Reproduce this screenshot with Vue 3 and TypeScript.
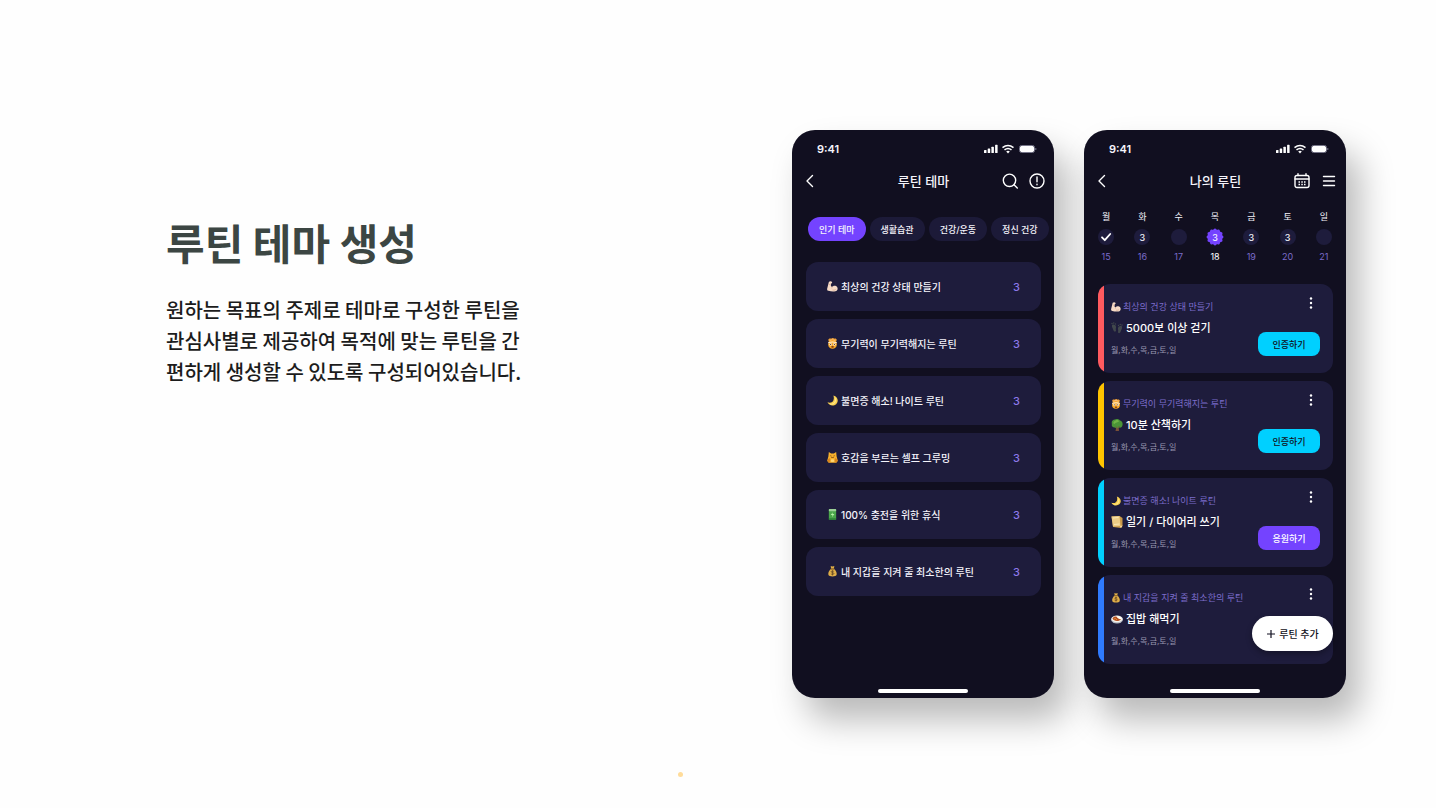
<script setup lang="ts">
type Emoji = 'arm' | 'mind' | 'moon' | 'cat' | 'battery' | 'money' | 'feet' | 'tree' | 'note' | 'food'

interface Theme { emoji: Emoji; title: string; count: number }
interface Day { name: string; date: number; state: 'done' | 'planned' | 'empty' | 'today'; count?: number }
interface Routine {
  theme: Theme
  emoji: Emoji
  title: string
  color: string
  action?: { label: string; kind: 'verify' | 'cheer' }
}

const chips = ['인기 테마', '생활습관', '건강/운동', '정신 건강']

const themes: Theme[] = [
  { emoji: 'arm', title: '최상의 건강 상태 만들기', count: 3 },
  { emoji: 'mind', title: '무기력이 무기력해지는 루틴', count: 3 },
  { emoji: 'moon', title: '불면증 해소! 나이트 루틴', count: 3 },
  { emoji: 'cat', title: '호감을 부르는 셀프 그루밍', count: 3 },
  { emoji: 'battery', title: '100% 충전을 위한 휴식', count: 3 },
  { emoji: 'money', title: '내 지갑을 지켜 줄 최소한의 루틴', count: 3 },
]

const days: Day[] = [
  { name: '월', date: 15, state: 'done' },
  { name: '화', date: 16, state: 'planned', count: 3 },
  { name: '수', date: 17, state: 'empty' },
  { name: '목', date: 18, state: 'today', count: 3 },
  { name: '금', date: 19, state: 'planned', count: 3 },
  { name: '토', date: 20, state: 'planned', count: 3 },
  { name: '일', date: 21, state: 'empty' },
]

const routines: Routine[] = [
  { theme: themes[0], emoji: 'feet', title: '5000보 이상 걷기', color: 'red', action: { label: '인증하기', kind: 'verify' } },
  { theme: themes[1], emoji: 'tree', title: '10분 산책하기', color: 'yellow', action: { label: '인증하기', kind: 'verify' } },
  { theme: themes[2], emoji: 'note', title: '일기 / 다이어리 쓰기', color: 'cyan', action: { label: '응원하기', kind: 'cheer' } },
  { theme: themes[5], emoji: 'food', title: '집밥 해먹기', color: 'blue' },
]

const repeat = '월,화,수,목,금,토,일'

function scallop(bumps: number, r: number, depth: number): string {
  const pts: string[] = []
  for (let i = 0; i < 120; i++) {
    const a = (i / 120) * Math.PI * 2
    const d = r + depth * Math.cos(a * bumps)
    pts.push(`${(9 + d * Math.cos(a)).toFixed(2)},${(9 + d * Math.sin(a)).toFixed(2)}`)
  }
  return pts.join(' ')
}
const badge = scallop(12, 8, 0.5)
</script>

<template>
  <svg class="sprite" aria-hidden="true">
    <symbol id="e-arm" viewBox="0 0 24 24">
      <path d="M4 2c2-2 6-1.500 7 .3.700 1.300-.1 2.700-1.800 3.200L8.300 10.500c1.300.9 2 1.900 2.400 2.800 1.800-2.800 5.800-4 9-2.300 3.800 2 4.600 7 1.900 9.800-2.900 2.800-11.500 3-18.500.6-2.300-.8-3.100-2.300-2.800-4.500z" fill="#f6dac6" />
      <path d="M10.700 13.300c.3 1 .2 2-.3 2.900M4 8c1.700.2 3.300-.5 5-2M12 19.500c2.500.8 5 .2 7-1" fill="none" stroke="#c8957b" stroke-width="1.200" />
    </symbol>
    <symbol id="e-mind" viewBox="0 0 24 24">
      <path d="M4 7C1 3 5 0 9 1.500c2-2 5-2 7 0 4-1 7 2.500 4 5.500l-1 3H5z" fill="#f4a53a" />
      <path d="M6 6c2-3 10-3 12 0l-1 3H7z" fill="#f7d5c5" />
      <circle cx="12" cy="14" r="9.500" fill="#f8a928" />
      <path d="M2.500 9.500q9.500-4 19 0v2q-9.500-3-19 0z" fill="#fff0dc" />
      <circle cx="8" cy="14" r="2.600" fill="#fff" /><circle cx="16" cy="14" r="2.600" fill="#fff" />
      <circle cx="8" cy="14" r="1.300" fill="#5b2c10" /><circle cx="16" cy="14" r="1.300" fill="#5b2c10" />
      <ellipse cx="12" cy="19.500" rx="3" ry="1.800" fill="#81380f" />
    </symbol>
    <symbol id="e-moon" viewBox="0 0 24 24">
      <path d="M14 1c10 3 12 13 6 19-6 5-16 3-19-4 8 3 17-2 13-15z" fill="#f8cf4f" />
      <path d="M17 4c5 6 3 13-3 16-3 1.500-7 1-9-1 9 2 15-5 12-15z" fill="#ffe78b" />
    </symbol>
    <symbol id="e-cat" viewBox="0 0 24 24">
      <path d="M4 0l5 3h6l5-3 1 10 2.500 9-3 4.500h-17l-3-4.500 2.500-9z" fill="#f7b02c" />
      <path d="M2 16l4-3 2 6-4 4-3-3zm20 0l-4-3-2 6 4 4 3-3z" fill="#d9851d" />
      <path d="M7 8l3 1M17 8l-3 1M9 12h6" stroke="#714016" stroke-width="1.500" />
      <ellipse cx="12" cy="19" rx="4" ry="3" fill="#ffd673" />
    </symbol>
    <symbol id="e-battery" viewBox="0 0 24 24">
      <rect x="4" y="0" width="16" height="24" rx="2" fill="#4aa64b" />
      <rect x="4" y="0" width="16" height="5" rx="1.500" fill="#9bcf96" />
      <rect x="4" y="20" width="16" height="4" rx="1.500" fill="#2d8138" />
      <path d="M13 7l-5 6h4l-1 5 5-7h-4z" fill="#b8f5a9" />
    </symbol>
    <symbol id="e-money" viewBox="0 0 24 24">
      <path d="M8 0l4 1 4-1-1 6c4 3 7 8 6 13-1 5-17 5-18 0-1-5 2-10 6-13z" fill="#dfae48" />
      <path d="M8 6.500h8" stroke="#805a25" stroke-width="2.500" />
      <path d="M15 12c-1-1.500-6-1.500-6 .5 0 2.500 6 1 6 4 0 2.500-5 2-6.500.5M12 9.500v11" fill="none" stroke="#674a25" stroke-width="1.800" />
    </symbol>
    <symbol id="e-feet" viewBox="0 0 24 24">
      <g fill="#41474c">
        <path d="M2 6c4-2 8 0 8 4 0 3-1 4 0 7 0 3-4 3-5 0-1-4-4-7-3-11z" />
        <path d="M22 9c-4-2-8 0-8 4 0 3 1 4 0 7 0 3 4 3 5 0 1-4 4-7 3-11z" />
        <circle cx="2" cy="3" r="1.500" /><circle cx="5.500" cy="2" r="1.500" /><circle cx="9" cy="4" r="1.300" />
        <circle cx="22" cy="6" r="1.500" /><circle cx="18.500" cy="5" r="1.500" /><circle cx="15" cy="7" r="1.300" />
      </g>
    </symbol>
    <symbol id="e-tree" viewBox="0 0 24 24">
      <path d="M11 13h4l1 11H9z" fill="#795038" />
      <path d="M8 1c4-2 8-1 10 2 4 1 6 5 5 9 0 4-4 6-7 5-3 3-6 2-8 0-4 1-8-3-6-7-2-4 1-9 6-9z" fill="#4a9437" />
      <path d="M9 3c4-2 7 0 7 2-2 2-7 2-9 5-4-1-2-6 2-7z" fill="#6fb347" />
      <path d="M12 20l-2-5m3 4l4-5" stroke="#795038" stroke-width="1.500" />
    </symbol>
    <symbol id="e-note" viewBox="0 0 24 24">
      <path d="M1 1l16-1 6 4v16l-3 4-16-2z" fill="#c99a49" />
      <path d="M1 1l16-1 2 20-15 1z" fill="#eccb85" />
      <path d="M4 4l11-1M6 17l11-1" stroke="#fff0c5" stroke-width="1.500" />
      <path d="M18 20l5-1-3 5z" fill="#f8dda0" />
    </symbol>
    <symbol id="e-food" viewBox="0 0 24 24">
      <ellipse cx="12" cy="13" rx="12" ry="8" fill="#b7bdc7" />
      <ellipse cx="12" cy="12" rx="11" ry="6.500" fill="#f5f1ea" />
      <path d="M3 11c3-5 8-5 10-2s5 1 7 3c-3 6-15 5-17-1z" fill="#b75224" />
      <path d="M12 8c4-2 8 0 9 3-2 3-6 1-9-3z" fill="#fffdf4" />
      <path d="M6 12l3-1 3 3" stroke="#f09c40" stroke-width="1.600" fill="none" />
    </symbol>
    <symbol id="status" viewBox="0 0 53 10">
      <g fill="#fff">
        <rect x="0" y="6" width="2.500" height="3" rx=".6" /><rect x="3.700" y="4.500" width="2.500" height="4.500" rx=".6" />
        <rect x="7.400" y="2.700" width="2.500" height="6.300" rx=".6" /><rect x="11.100" y=".8" width="2.500" height="8.200" rx=".6" />
        <rect x="36" y="2" width="14" height="6" rx="1.300" />
      </g>
      <path d="M18.500 3.600q5.500-4.200 11 0M20.500 5.800q3.500-2.700 7 0" fill="none" stroke="#fff" stroke-width="1.600" />
      <path d="M22.200 7.500q1.800-1.400 3.600 0L24 9.400z" fill="#fff" />
      <rect x="35.500" y="1.500" width="15" height="7" rx="2" fill="none" stroke="#77768a" />
      <path d="M51.800 4v2" stroke="#77768a" stroke-width="1" />
    </symbol>
  </svg>

  <main class="page">
    <section class="intro">
      <h1>루틴 테마 생성</h1>
      <p>원하는 목표의 주제로 테마로 구성한 루틴을 관심사별로 제공하여 목적에 맞는 루틴을 간편하게 생성할 수 있도록 구성되어있습니다.</p>
    </section>

    <div class="phones">
      <section class="phone" aria-label="루틴 테마">
        <div class="status"><span>9:41</span><svg><use href="#status" /></svg></div>
        <header class="bar">
          <button class="icon" aria-label="뒤로"><svg viewBox="0 0 16 16"><path d="M10.500 2.500L5 8l5.500 5.500" /></svg></button>
          <h2>루틴 테마</h2>
          <div class="tools">
            <button class="icon" aria-label="검색"><svg viewBox="0 0 16 16"><circle cx="7.500" cy="7.300" r="6.200" /><path d="M12 11.800l3.300 3.300" /></svg></button>
            <button class="icon" aria-label="안내"><svg viewBox="0 0 16 16"><circle cx="8" cy="8" r="7" /><path d="M8 4v4.700M8 11.200v.6" /></svg></button>
          </div>
        </header>
        <nav class="chips">
          <button v-for="(c, i) in chips" :key="c" class="chip" :class="{ on: i === 0 }">{{ c }}</button>
        </nav>
        <ul class="themes">
          <li v-for="t in themes" :key="t.title">
            <svg class="emoji"><use :href="`#e-${t.emoji}`" /></svg>
            <span class="name">{{ t.title }}</span>
            <span class="count">{{ t.count }}</span>
          </li>
        </ul>
        <div class="home"></div>
      </section>

      <section class="phone" aria-label="나의 루틴">
        <div class="status"><span>9:41</span><svg><use href="#status" /></svg></div>
        <header class="bar">
          <button class="icon" aria-label="뒤로"><svg viewBox="0 0 16 16"><path d="M10.500 2.500L5 8l5.500 5.500" /></svg></button>
          <h2>나의 루틴</h2>
          <div class="tools">
            <button class="icon" aria-label="달력">
              <svg viewBox="0 0 16 16">
                <rect x="1" y="2.500" width="14" height="12" rx="2" /><path d="M1 6h14M4 .8v1.700M12 .8v1.700" />
                <path class="cells" d="M4.500 9h1.500M7.300 9h1.500M10 9h1.500M4.500 11.500h1.500M7.300 11.500h1.500M10 11.500h1.500" />
              </svg>
            </button>
            <button class="icon" aria-label="메뉴"><svg viewBox="0 0 16 16"><path d="M2.500 3.500h11M2.500 8h11M2.500 12.500h11" /></svg></button>
          </div>
        </header>
        <ol class="week">
          <li v-for="d in days" :key="d.date" :class="d.state">
            <span class="day">{{ d.name }}</span>
            <span class="mark">
              <svg viewBox="0 0 18 18">
                <polygon v-if="d.state === 'today'" class="disc" :points="badge" />
                <circle v-else class="disc" cx="9" cy="9" r="8" />
                <path v-if="d.state === 'done'" class="check" d="M5 9.300l2.800 2.900L13.200 6" />
              </svg>
              <b v-if="d.count">{{ d.count }}</b>
            </span>
            <span class="date">{{ d.date }}</span>
          </li>
        </ol>
        <ul class="routines">
          <li v-for="r in routines" :key="r.title" :class="r.color">
            <div class="info">
              <p class="theme"><svg class="emoji"><use :href="`#e-${r.theme.emoji}`" /></svg>{{ r.theme.title }}</p>
              <h3><svg class="emoji"><use :href="`#e-${r.emoji}`" /></svg>{{ r.title }}</h3>
              <p class="repeat">{{ repeat }}</p>
            </div>
            <div class="side">
              <button class="more" aria-label="더보기"><svg viewBox="0 0 4 12"><circle cx="2" cy="1.500" r="1.200" /><circle cx="2" cy="6" r="1.200" /><circle cx="2" cy="10.500" r="1.200" /></svg></button>
              <button v-if="r.action" class="action" :class="r.action.kind">{{ r.action.label }}</button>
            </div>
          </li>
        </ul>
        <button class="fab"><svg viewBox="0 0 10 10"><path d="M5 1v8M1 5h8" /></svg>루틴 추가</button>
        <div class="home"></div>
      </section>
    </div>
    <i class="dot"></i>
  </main>
</template>

<style>
body {
  margin: 0;
  background: #fefefe;
}
</style>

<style scoped>
.sprite {
  position: absolute;
  width: 0;
  height: 0;
}
.page {
  position: relative;
  box-sizing: border-box;
  min-height: 100vh;
  padding: 130px 90px 110px 166px;
  display: flex;
  justify-content: space-between;
  align-items: flex-start;
  font-family: Inter, "Noto Sans CJK KR", sans-serif;
}
h1, h2, h3, p, ul, ol {
  margin: 0;
  padding: 0;
  list-style: none;
}
button {
  margin: 0;
  padding: 0;
  border: 0;
  background: none;
  font: inherit;
  color: inherit;
}
.intro {
  width: 356px;
  padding-top: 82px;
  font-family: "Noto Sans CJK KR", sans-serif;
}
.intro h1 {
  font-size: 42px;
  line-height: 60px;
  font-weight: 700;
  color: #3c4643;
  white-space: nowrap;
}
.intro p {
  margin-top: 22px;
  font-size: 20px;
  line-height: 31px;
  font-weight: 500;
  color: #1c1c1c;
}
.phones {
  display: flex;
  gap: 30px;
}
.phone {
  position: relative;
  box-sizing: border-box;
  width: 262px;
  min-height: 568px;
  padding: 10px 13px 0;
  border-radius: 23px;
  background: #110f20;
  color: #f5f4fb;
  box-shadow: 14px 22px 34px rgba(0, 0, 0, .27);
}
.status {
  display: flex;
  align-items: center;
  justify-content: space-between;
  height: 18px;
  padding: 0 4px 0 12px;
  font-size: 11px;
  font-weight: 600;
}
.status svg {
  width: 53px;
  height: 10px;
}
.bar {
  display: grid;
  grid-template-columns: 1fr auto 1fr;
  align-items: center;
  height: 24px;
  margin: 11px -4px 0 -3px;
}
.bar h2 {
  font-size: 13px;
  line-height: 20px;
  font-weight: 500;
}
.tools {
  display: flex;
  justify-content: flex-end;
  gap: 11px;
}
.icon {
  width: 16px;
  height: 16px;
}
.icon svg {
  display: block;
  width: 16px;
  height: 16px;
  fill: none;
  stroke: #fff;
  stroke-width: 1.400;
  stroke-linecap: round;
  stroke-linejoin: round;
}
.icon .cells {
  stroke-linecap: butt;
}
.chips {
  display: flex;
  gap: 4px;
  margin: 24px -10px 0 3px;
}
.chip {
  height: 24px;
  padding: 0 11px;
  border-radius: 12px;
  background: #1c1a38;
  font-size: 9px;
  font-weight: 500;
  white-space: nowrap;
}
.chip.on {
  background: #7443ff;
}
.themes {
  display: grid;
  gap: 8px;
  margin: 21px 0 0 1px;
}
.themes li {
  display: flex;
  align-items: center;
  gap: 3px;
  box-sizing: border-box;
  height: 49px;
  padding: 0 21px;
  border-radius: 12px;
  background: #1e1c3c;
  font-size: 10px;
  font-weight: 500;
}
.emoji {
  flex: none;
  width: 11px;
  height: 11px;
}
.name {
  flex: 1;
  white-space: nowrap;
}
.count {
  font-size: 11px;
  color: #8b78e8;
}
.home {
  position: absolute;
  left: 50%;
  bottom: 5px;
  width: 90px;
  height: 4px;
  margin-left: -45px;
  border-radius: 2px;
  background: #fff;
}
.week {
  display: grid;
  grid-template-columns: repeat(7, 1fr);
  margin: 15px -9px 0;
  text-align: center;
}
.week li {
  display: grid;
  justify-items: center;
  font-size: 9px;
}
.day {
  line-height: 18px;
}
.mark {
  display: grid;
  place-items: center;
  height: 22px;
}
.mark svg, .mark b {
  grid-area: 1 / 1;
}
.mark svg {
  width: 18px;
  height: 18px;
}
.mark b {
  font-weight: 500;
}
.disc {
  fill: #1e1c3c;
}
.today .disc {
  fill: #7443ff;
}
.check {
  fill: none;
  stroke: #fff;
  stroke-width: 1.800;
  stroke-linecap: round;
  stroke-linejoin: round;
}
.date {
  line-height: 18px;
  color: #7c6ccb;
}
.today .date {
  color: #fff;
}
.routines {
  display: grid;
  gap: 8px;
  margin: 18px 0 0 1px;
}
.routines li {
  display: flex;
  box-sizing: border-box;
  height: 89px;
  padding-right: 13px;
  border-radius: 12px;
  overflow: hidden;
  background: #1e1c3c;
}
.routines li::before {
  content: "";
  flex: none;
  width: 6px;
  margin-right: 7px;
}
.red::before { background: #ff5a5f; }
.yellow::before { background: #ffc400; }
.cyan::before { background: #00d0ff; }
.blue::before { background: #2f7bff; }
.info {
  flex: 1;
  padding-top: 13px;
}
.theme, .routines h3 {
  display: flex;
  align-items: center;
  white-space: nowrap;
}
.theme {
  gap: 2px;
  font-size: 9px;
  line-height: 20px;
  color: #7c6ccb;
}
.theme .emoji {
  width: 10px;
  height: 10px;
}
.routines h3 {
  gap: 3px;
  font-size: 11px;
  line-height: 22px;
  font-weight: 500;
  color: #fff;
}
.routines h3 .emoji {
  width: 12px;
  height: 12px;
}
.repeat {
  font-size: 8px;
  line-height: 22px;
  color: #9a98b0;
}
.side {
  display: flex;
  flex-direction: column;
  align-items: flex-end;
  gap: 23px;
  padding-top: 13px;
}
.more {
  width: 4px;
  height: 12px;
  margin-right: 7px;
}
.more svg {
  display: block;
  width: 4px;
  height: 12px;
  fill: #fff;
}
.action {
  width: 62px;
  height: 24px;
  border-radius: 8px;
  font-size: 9px;
  font-weight: 500;
}
.verify {
  background: #00d0ff;
  color: #110f20;
}
.cheer {
  background: #7443ff;
  color: #fff;
}
.fab {
  position: absolute;
  right: 13px;
  bottom: 47px;
  display: flex;
  align-items: center;
  justify-content: center;
  gap: 3px;
  width: 81px;
  height: 35px;
  border-radius: 18px;
  background: #fff;
  color: #110f20;
  font-size: 10px;
  font-weight: 500;
  box-shadow: 0 3px 6px rgba(0, 0, 0, .3);
}
.fab svg {
  width: 10px;
  height: 10px;
  fill: none;
  stroke: #110f20;
  stroke-width: 1.200;
}
.dot {
  position: absolute;
  left: 678px;
  bottom: 31px;
  width: 5px;
  height: 5px;
  border-radius: 50%;
  background: #ffdc9a;
}
</style>
